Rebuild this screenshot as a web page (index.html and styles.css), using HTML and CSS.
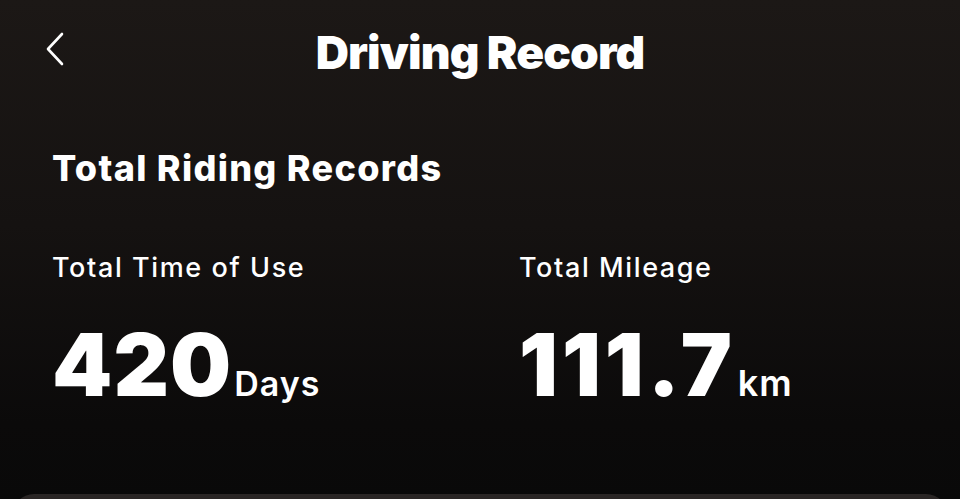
FILE: index.html
```html
<!DOCTYPE html>
<html lang="en">
<head>
    <meta charset="UTF-8">
    <meta name="viewport" content="width=device-width, initial-scale=1.0">
    <title>Driving Record</title>
    <link rel="stylesheet" href="styles.css">
</head>
<body>
    <header class="nav-bar">
        <button class="back-btn" aria-label="Back">
            <svg width="20" height="34" viewBox="0 0 20 34">
                <path d="M17 2 L3 17 L17 32" fill="none" stroke="#fff" stroke-width="2.6" stroke-linecap="round" stroke-linejoin="round"/>
            </svg>
        </button>
        <h1 class="nav-title">Driving Record</h1>
    </header>

    <section class="records">
        <h2 class="section-title">Total Riding Records</h2>

        <div class="stats">
            <div class="stat">
                <div class="stat-label">Total Time of Use</div>
                <div class="stat-value">
                    <span class="num">420</span><span class="unit">Days</span>
                </div>
            </div>
            <div class="stat">
                <div class="stat-label">Total Mileage</div>
                <div class="stat-value">
                    <span class="num num-wide">111.7</span><span class="unit unit-km">km</span>
                </div>
            </div>
        </div>
    </section>

    <!-- next card peeks in at the bottom -->
    <div class="next-card"></div>
</body>
</html>
```

FILE: styles.css
```css
html, body {
    margin: 0;
    height: 100%;
}
body {
    background: linear-gradient(180deg, #1c1816 0%, #151211 45%, #0b0a0a 85%, #090909 100%);
    color: #fff;
    font-family: Inter, "Open Sans", sans-serif;
    overflow: hidden;
    display: flex;
    flex-direction: column;
}
.nav-bar {
    display: flex;
    align-items: center;
    justify-content: center;
    position: relative;
    height: 108px;
}
.back-btn {
    position: absolute;
    left: 45px;
    top: 32px;
    background: none;
    border: 0;
    padding: 0;
    display: flex;
}
.nav-title {
    margin: 0;
    font-size: 46px;
    font-weight: 900;
    letter-spacing: -0.9px;
    transform: translateY(-2px);
}
.records {
    padding: 0 0 0 52px;
    flex: 1;
}
.section-title {
    margin: 38px 0 0;
    font-size: 36px;
    font-weight: 800;
    letter-spacing: 1.3px;
    line-height: 44px;
}
.stats {
    display: grid;
    grid-template-columns: 467px 1fr;
    margin-top: 61px;
}
.stat-label {
    font-size: 27px;
    font-weight: 500;
    line-height: 34px;
    letter-spacing: 1.6px;
}
.stat-value {
    display: flex;
    align-items: baseline;
    margin-top: 35px;
}
.num {
    font-size: 86px;
    font-weight: 900;
    line-height: 90px;
    letter-spacing: 1px;
}
.num-wide {
    letter-spacing: 4px;
}
.unit {
    font-size: 34px;
    font-weight: 600;
    letter-spacing: 1px;
    margin-left: 2px;
}
.unit-km {
    font-size: 36px;
    margin-left: 2px;
}
.next-card {
    margin: 0 12px;
    height: 24px;
    background: #2a2625;
    border-radius: 22px 22px 0 0;
    position: absolute;
    left: 0;
    right: 0;
    top: 494px;
}
```
